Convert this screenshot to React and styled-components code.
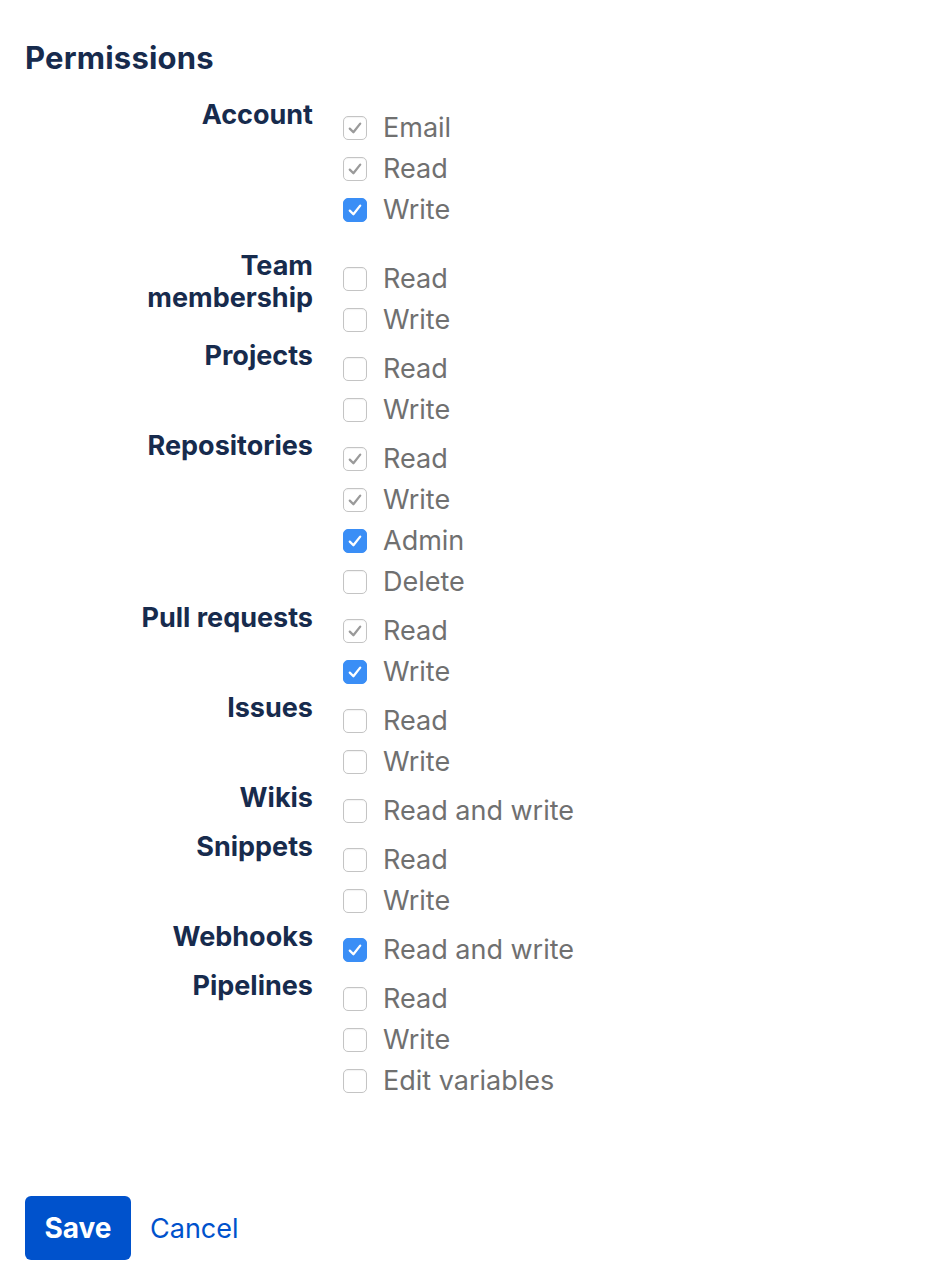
import React from "react";
import styled, { createGlobalStyle } from "styled-components";

const Global = createGlobalStyle`
  html, body { margin: 0; padding: 0; background: #fff; }
  body { font-family: Inter, "Noto Sans", "Liberation Sans", sans-serif; }
`;

const Page = styled.div`
  padding: 38px 0 0 25px;
`;

const Heading = styled.h3`
  margin: 0 0 21px;
  font-size: 31px;
  line-height: 40px;
  font-weight: 700;
  color: #172b4d;
  letter-spacing: 0.2px;
`;

const Group = styled.div`
  display: flex;
  gap: 30px;
  margin-bottom: ${(p) => p.$extra || 0}px;
`;

const Label = styled.div`
  width: 288px;
  flex: none;
  text-align: right;
  font-size: 27px;
  line-height: 32px;
  font-weight: 700;
  color: #172b4d;
`;

const Options = styled.div`
  display: flex;
  flex-direction: column;
  padding-top: 8px;
`;

const Option = styled.label`
  display: flex;
  align-items: center;
  height: 41px;
  gap: 16px;
  font-size: 27px;
  color: #707070;
`;

const Box = styled.span`
  width: 24px;
  height: 24px;
  box-sizing: border-box;
  border-radius: 5px;
  flex: none;
  display: flex;
  align-items: center;
  justify-content: center;
  background: ${(p) => (p.$state === "on" ? "#3a8ef6" : "#fff")};
  border: ${(p) =>
    p.$state === "on" ? "1px solid #3a8ef6" : "1px solid #c4c4c4"};
  box-shadow: ${(p) =>
    p.$state === "on" ? "none" : "inset 0 1px 1px rgba(0,0,0,0.05)"};
`;

const Actions = styled.div`
  display: flex;
  align-items: center;
  gap: 19px;
  margin-top: 95px;
`;

const SaveButton = styled.button`
  width: 106px;
  height: 64px;
  border: none;
  border-radius: 6px;
  background: #0052cc;
  color: #fff;
  font-family: inherit;
  font-size: 28px;
  font-weight: 700;
  cursor: pointer;
`;

const CancelLink = styled.a`
  color: #0052cc;
  font-size: 27px;
  text-decoration: none;
`;

const Check = ({ color }) => (
  <svg width="22" height="22" viewBox="0 0 22 22">
    <path
      d="M5.8 11.6 L9.4 15.2 L16.2 6.6"
      fill="none"
      stroke={color}
      strokeWidth="2.3"
      strokeLinecap="round"
      strokeLinejoin="round"
    />
  </svg>
);

const Checkbox = ({ state }) => (
  <Box $state={state}>
    {state === "on" && <Check color="#fff" />}
    {state === "dis" && <Check color="#9a9a9a" />}
  </Box>
);

const groups = [
  {
    label: "Account",
    extra: 20,
    opts: [
      ["Email", "dis"],
      ["Read", "dis"],
      ["Write", "on"],
    ],
  },
  {
    label: "Team membership",
    labelLines: ["Team", "membership"],
    opts: [
      ["Read", "off"],
      ["Write", "off"],
    ],
  },
  { label: "Projects", opts: [["Read", "off"], ["Write", "off"]] },
  {
    label: "Repositories",
    opts: [
      ["Read", "dis"],
      ["Write", "dis"],
      ["Admin", "on"],
      ["Delete", "off"],
    ],
  },
  { label: "Pull requests", opts: [["Read", "dis"], ["Write", "on"]] },
  { label: "Issues", opts: [["Read", "off"], ["Write", "off"]] },
  { label: "Wikis", opts: [["Read and write", "off"]] },
  { label: "Snippets", opts: [["Read", "off"], ["Write", "off"]] },
  { label: "Webhooks", opts: [["Read and write", "on"]] },
  {
    label: "Pipelines",
    opts: [
      ["Read", "off"],
      ["Write", "off"],
      ["Edit variables", "off"],
    ],
  },
];

export default function App() {
  return (
    <Page>
      <Global />
      <Heading>Permissions</Heading>
      {groups.map((g) => (
        <Group key={g.label} $extra={g.extra}>
          <Label>
            {g.labelLines
              ? g.labelLines.map((l, i) => (
                  <React.Fragment key={l}>
                    {i > 0 && <br />}
                    {l}
                  </React.Fragment>
                ))
              : g.label}
          </Label>
          <Options>
            {g.opts.map(([t, s]) => (
              <Option key={t}>
                <Checkbox state={s} />
                {t}
              </Option>
            ))}
          </Options>
        </Group>
      ))}
      <Actions>
        <SaveButton>Save</SaveButton>
        <CancelLink href="#">Cancel</CancelLink>
      </Actions>
    </Page>
  );
}
